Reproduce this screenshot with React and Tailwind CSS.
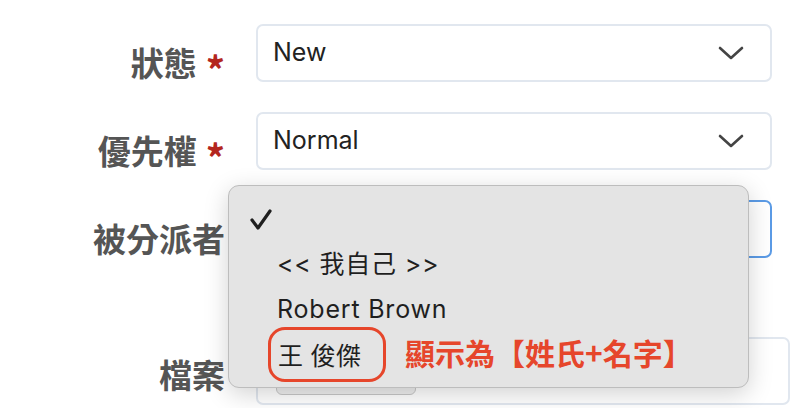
import React from 'react';

const latin = { fontFamily: 'Inter, "Noto Sans CJK TC", sans-serif' };
const cjk = { fontFamily: '"Noto Sans CJK TC", "Noto Sans", sans-serif' };

const Chevron = () => (
  <svg width="26" height="14" viewBox="0 0 26 14" className="shrink-0">
    <polyline points="2,2 13,12 24,2" fill="none" stroke="#444" strokeWidth="2.6" strokeLinecap="round" strokeLinejoin="round" />
  </svg>
);

const Check = () => (
  <svg width="22" height="22" viewBox="0 0 22 22">
    <polyline points="2,11 8,19 20,2" fill="none" stroke="#1f1f1f" strokeWidth="3.2" strokeLinecap="round" strokeLinejoin="round" />
  </svg>
);

const Label = ({ text, required }) => (
  <div className="w-[228px] shrink-0 flex justify-end items-center pt-[22px] pr-0" style={cjk}>
    <span className="text-[33px] leading-[33px] font-bold text-[#555555]">{text}</span>
    {required ? (
      <span className="ml-[9px] mr-[3px] text-[38px] leading-[33px] font-bold text-[#b3261e] translate-y-[6px]">*</span>
    ) : (
      <span className="w-[3px]" />
    )}
  </div>
);

const SelectBox = ({ value, focused }) => (
  <div
    className={
      focused
        ? 'ml-[28px] w-[516px] h-[58px] rounded-[7px] border-2 border-[#5b9be6] bg-white flex items-center justify-between pl-[17px] pr-[26px]'
        : 'ml-[28px] w-[516px] h-[58px] rounded-[7px] border-2 border-[#e1e7ef] bg-white flex items-center justify-between pl-[15px] pr-[26px]'
    }
  >
    <span className="text-[25px] text-[#222222]" style={latin}>{value}</span>
    <Chevron />
  </div>
);

export default function App() {
  return (
    <div className="relative w-[790px] h-[408px] overflow-hidden bg-white">
      <div className="flex flex-col pt-[24px]">
        {/* status */}
        <div className="flex items-start">
          <Label text="狀態" required />
          <SelectBox value="New" />
        </div>
        {/* priority */}
        <div className="flex items-start mt-[30px]">
          <Label text="優先權" required />
          <SelectBox value="Normal" />
        </div>
        {/* assignee */}
        <div className="flex items-start mt-[30px]">
          <Label text="被分派者" />
          <SelectBox value="" focused />
        </div>
        {/* file */}
        <div className="flex items-start mt-[79px]">
          <div className="w-[228px] shrink-0 flex justify-end pt-[21px]" style={cjk}>
            <span className="text-[33px] leading-[33px] font-bold text-[#555555] mr-[3px]">檔案</span>
          </div>
          <div className="ml-[28px] w-[560px] h-[68px] rounded-[7px] border-2 border-[#e1e7ef] bg-white pl-[18px] pt-[12px]">
            <div className="w-[140px] h-[44px] rounded-[6px] border border-[#c8c8c8] bg-[#efefef]" />
          </div>
        </div>
      </div>

      {/* open dropdown list */}
      <div className="absolute left-[228px] top-[185px] w-[521px] h-[203px] rounded-[11px] border border-[#bdbdbd] bg-[#e4e4e4] shadow-[0_6px_24px_rgba(0,0,0,0.18)] pt-[11px]">
        <div className="h-[45px] flex items-center pl-[21px]">
          <Check />
        </div>
        <div className="h-[45px] flex items-center pl-[48px] text-[25px] tracking-[0.8px] text-[#1f1f1f]" style={latin}>
          {'<< 我自己 >>'}
        </div>
        <div className="h-[45px] flex items-center pl-[48px] text-[25px] tracking-[0.8px] text-[#1f1f1f]" style={latin}>
          Robert Brown
        </div>
        <div className="h-[45px] flex items-center pl-[39px]">
          <div className="h-[55px] w-[118px] shrink-0 rounded-[17px] border-[3px] border-[#e6462b] flex items-center pl-[7px] text-[25px] tracking-[0.8px] text-[#1f1f1f]" style={cjk}>
            王 俊傑
          </div>
          <span className="ml-[19px] text-[30px] font-bold text-[#e6462b] -translate-y-[2px] whitespace-nowrap" style={cjk}>
            顯示為【姓氏+名字】
          </span>
        </div>
      </div>
    </div>
  );
}
